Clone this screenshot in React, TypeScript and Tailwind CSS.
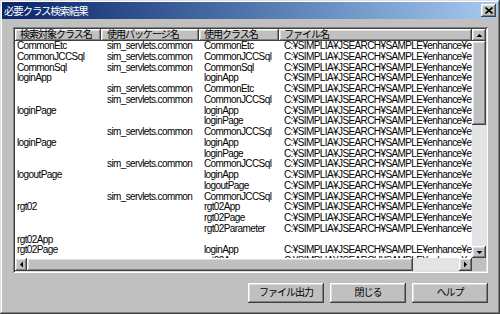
import React from "react";

const P = "C:¥SIMPLIA¥JSEARCH¥SAMPLE¥enhance¥e";
const S = "sim_servlets.common";

const rows: string[][] = [
  ["CommonEtc", S, "CommonEtc", P],
  ["CommonJCCSql", S, "CommonJCCSql", P],
  ["CommonSql", S, "CommonSql", P],
  ["loginApp", "", "loginApp", P],
  ["", S, "CommonEtc", P],
  ["", S, "CommonJCCSql", P],
  ["loginPage", "", "loginApp", P],
  ["", "", "loginPage", P],
  ["", S, "CommonJCCSql", P],
  ["loginPage", "", "loginApp", P],
  ["", "", "loginPage", P],
  ["", S, "CommonJCCSql", P],
  ["logoutPage", "", "loginApp", P],
  ["", "", "logoutPage", P],
  ["", S, "CommonJCCSql", P],
  ["rgt02", "", "rgt02App", P],
  ["", "", "rgt02Page", P],
  ["", "", "rgt02Parameter", P],
  ["rgt02App", "", "", ""],
  ["rgt02Page", "", "loginApp", P],
  ["", "", "rgt02App", P],
];

const raised =
  "bg-[#c0c0c0] shadow-[inset_-1px_-1px_#404040,inset_1px_1px_#ffffff,inset_-2px_-2px_#808080,inset_2px_2px_#dfdfdf]";

const jp = "font-['Liberation_Sans','Noto_Sans_CJK_JP',sans-serif]";

function Arrow({ dir }: { dir: "up" | "down" | "left" | "right" }) {
  const pts =
    dir === "up"
      ? "0.5,4 3.5,1 6.5,4"
      : dir === "down"
      ? "0.5,1 3.5,4 6.5,1"
      : dir === "left"
      ? "4,0.5 1,3.5 4,6.5"
      : "1,0.5 4,3.5 1,6.5";
  const w = dir === "up" || dir === "down" ? 7 : 5;
  const h = dir === "up" || dir === "down" ? 5 : 7;
  return (
    <svg width={w} height={h} viewBox={`0 0 ${w} ${h}`}>
      <polygon points={pts} fill="#000" />
    </svg>
  );
}

function HeaderCell({ label, className }: { label: string; className: string }) {
  return (
    <div
      className={`${className} h-[12px] shrink-0 ${raised.replace(
        "bg-[#c0c0c0] ",
        ""
      )} bg-[#c0c0c0] flex items-center overflow-hidden whitespace-nowrap text-[10px] leading-[12px] tracking-[-1px] text-black`}
    >
      {label}
    </div>
  );
}

export default function App() {
  return (
    <div
      className={`w-[500px] h-[314px] bg-[#c0c0c0] p-[2px] flex flex-col shadow-[inset_-1px_-1px_#404040,inset_1px_1px_#dfdfdf,inset_-2px_-2px_#808080,inset_2px_2px_#ffffff] ${jp}`}
    >
      {/* Title bar */}
      <div className="h-[17px] shrink-0 bg-gradient-to-r from-[#0a246a] to-[#a6caf0] flex items-center justify-between pl-[2px] pr-[2px]">
        <span className="text-white text-[10.5px] leading-[14px] tracking-[-1.2px]">
          必要クラス検索結果
        </span>
        <div className={`${raised} w-[15px] h-[13px] flex items-center justify-center`}>
          <svg width="8" height="7" viewBox="0 0 8 7">
            <path d="M0.5 0.5 L7.5 6.5 M7.5 0.5 L0.5 6.5" stroke="#000" strokeWidth="1.6" />
          </svg>
        </div>
      </div>

      {/* List box */}
      <div className="mt-[8px] ml-[11px] mr-[10px] h-[246px] shrink-0 bg-white p-[2px] shadow-[inset_1px_1px_#808080,inset_-1px_-1px_#ffffff,inset_2px_2px_#404040,inset_-2px_-2px_#dfdfdf]">
        <div className="grid grid-cols-[1fr_14px] grid-rows-[1fr_13px] h-full">
          {/* main area */}
          <div className="overflow-hidden flex flex-col">
            <div className="flex shrink-0">
              <HeaderCell label="検索対象クラス名" className="w-[86px] pl-[5px]" />
              <HeaderCell label="使用パッケージ名" className="w-[98px] pl-[6px]" />
              <HeaderCell label="使用クラス名" className="w-[80px] pl-[5px]" />
              <HeaderCell label="ファイル名" className="flex-1 pl-[5px]" />
            </div>
            <div className="flex flex-col">
              {rows.map((r, i) => (
                <div
                  key={i}
                  className="flex h-[10.75px] shrink-0 text-[10px] leading-[10.75px] tracking-[-0.6px] text-black whitespace-nowrap"
                >
                  <div className="w-[86px] pl-[2px] overflow-hidden">{r[0]}</div>
                  <div className="w-[98px] pl-[6px] overflow-hidden">{r[1]}</div>
                  <div className="w-[80px] pl-[5px] overflow-hidden">{r[2]}</div>
                  <div className="flex-1 pl-[5px] overflow-hidden">{r[3]}</div>
                </div>
              ))}
            </div>
          </div>

          {/* vertical scrollbar */}
          <div className="flex flex-col bg-[#e4e4e4]">
            <div className={`${raised} h-[12px] shrink-0 flex items-center justify-center`}>
              <Arrow dir="up" />
            </div>
            <div className={`${raised} h-[84px] shrink-0`} />
            <div className="flex-1" />
            <div className={`${raised} h-[12px] shrink-0 flex items-center justify-center`}>
              <Arrow dir="down" />
            </div>
          </div>

          {/* horizontal scrollbar */}
          <div className="flex bg-[#e4e4e4]">
            <div className={`${raised} w-[12px] shrink-0 flex items-center justify-center`}>
              <Arrow dir="left" />
            </div>
            <div className={`${raised} w-[386px] shrink-0`} />
            <div className="flex-1" />
            <div className={`${raised} w-[13px] shrink-0 flex items-center justify-center`}>
              <Arrow dir="right" />
            </div>
          </div>

          {/* corner */}
          <div className="bg-[#c0c0c0]" />
        </div>
      </div>

      {/* Buttons */}
      <div className="mt-[10px] mr-[10px] flex justify-end gap-[6px]">
        {["ファイル出力", "閉じる", "ヘルプ"].map((t) => (
          <div
            key={t}
            className={`${raised} w-[76px] h-[20px] flex items-center justify-center text-[10px] leading-[12px] tracking-[-1px] text-black`}
          >
            {t}
          </div>
        ))}
      </div>
    </div>
  );
}
